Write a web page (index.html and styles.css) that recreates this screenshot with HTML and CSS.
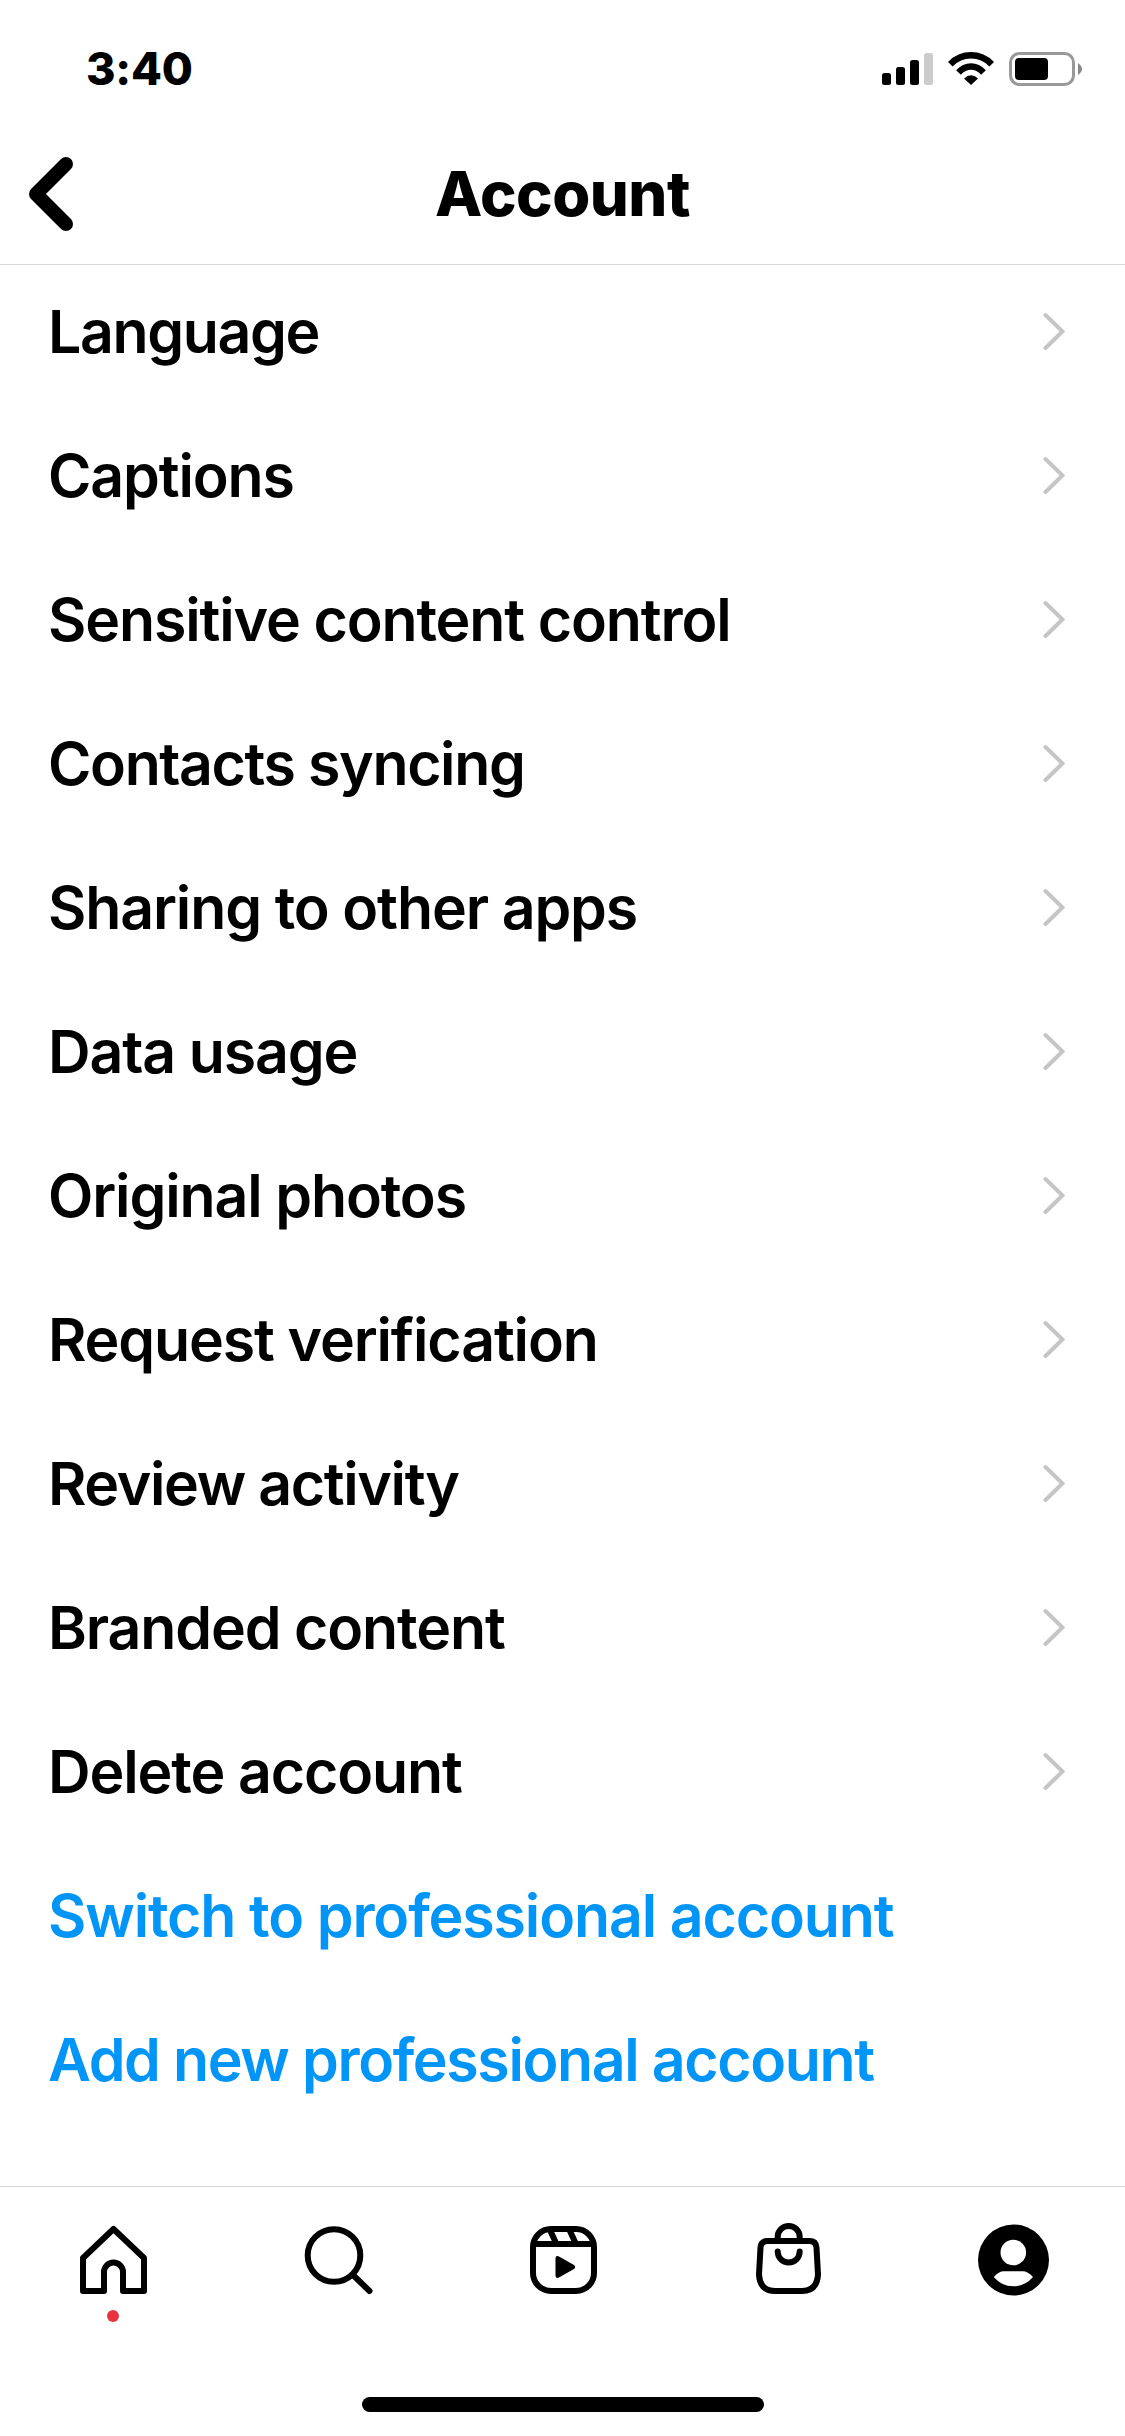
FILE: index.html
```
<!DOCTYPE html>
<html lang="en">
<head>
<meta charset="utf-8">
<title>Account</title>
<link rel="stylesheet" href="styles.css">
</head>
<body>
<svg class="defs" width="0" height="0"><symbol id="chev" viewBox="0 0 24 40"><path d="M4.500 4L21.500 20.500L4.500 37" fill="none" stroke="#c5c5c5" stroke-width="4" stroke-linecap="round"/></symbol></svg>
<header class="status">
  <span class="time">3:40</span>
  <span class="indicators">
    <svg width="51" height="34" viewBox="0 0 51 34"><rect y="21" width="9" height="12" rx="2.5"/><rect x="14" y="15" width="9" height="18" rx="2.5"/><rect x="28" y="8" width="9" height="25" rx="2.5"/><rect x="42" y="1" width="9" height="32" rx="2.5" fill="#ccc"/></svg>
    <svg width="46" height="34" viewBox="0 0 46 34"><g fill="none" stroke="#000" stroke-width="6.5"><path d="M2.300 12.200Q11 3.300 23 3.300T43.700 12.200"/><path d="M10.500 20.500Q16 14.500 23 14.500T35.500 20.500"/></g><path d="M16 26.500Q23 20 30 26.500L23 33z"/></svg>
    <svg width="74" height="34" viewBox="0 0 74 34"><rect x="1.500" y="1.500" width="63" height="31" rx="9" fill="none" stroke="#999" stroke-width="3"/><rect x="6" y="6" width="33" height="22" rx="4"/><path d="M69 11q8 6 0 12z" fill="#888"/></svg>
  </span>
</header>
<nav class="title-bar">
  <svg class="back" width="44" height="74" viewBox="0 0 44 74"><path d="M37 7L7 37l30 30" fill="none" stroke="#000" stroke-width="14" stroke-linecap="round" stroke-linejoin="round"/></svg>
  <h1>Account</h1>
</nav>
<main class="list">
  <div class="row tight"><span>Language</span><svg class="chev"><use href="#chev"/></svg></div>
  <div class="row"><span>Captions</span><svg class="chev"><use href="#chev"/></svg></div>
  <div class="row"><span>Sensitive content control</span><svg class="chev"><use href="#chev"/></svg></div>
  <div class="row tight"><span>Contacts syncing</span><svg class="chev"><use href="#chev"/></svg></div>
  <div class="row"><span>Sharing to other apps</span><svg class="chev"><use href="#chev"/></svg></div>
  <div class="row"><span>Data usage</span><svg class="chev"><use href="#chev"/></svg></div>
  <div class="row"><span>Original photos</span><svg class="chev"><use href="#chev"/></svg></div>
  <div class="row"><span>Request verification</span><svg class="chev"><use href="#chev"/></svg></div>
  <div class="row tight"><span>Review activity</span><svg class="chev"><use href="#chev"/></svg></div>
  <div class="row"><span>Branded content</span><svg class="chev"><use href="#chev"/></svg></div>
  <div class="row"><span>Delete account</span><svg class="chev"><use href="#chev"/></svg></div>
  <div class="row link"><span>Switch to professional account</span></div>
  <div class="row link tight"><span>Add new professional account</span></div>
</main>
<nav class="tabs">
  <a class="tab"><svg viewBox="0 0 72 72"><path d="M36.500 5L67 34v33H46V48a9.500 9.500 0 0 0-19 0v19H6V34z"/></svg><i class="dot"></i></a>
  <a class="tab"><svg viewBox="0 0 72 72"><circle cx="32" cy="31.500" r="26.300"/><path d="M51 51L67.500 67"/></svg></a>
  <a class="tab"><svg viewBox="0 0 72 72"><rect x="6" y="5" width="61" height="62" rx="18"/><path d="M6 20h61M22.500 5l7 15M42 5l7 15" stroke-linecap="butt"/><path class="solid" d="M28.500 34.500v17q0 3.500 3.500 2l15-8.500q2.500-2 0-4l-15-8.500q-3.500-1.500-3.500 2z"/></svg></a>
  <a class="tab"><svg viewBox="0 0 72 72"><path d="M15.500 17h42q6.500 0 7 6.500l1.500 27q-1 16.500-16 16.500H23Q8 67 7 50.500L8.500 23.500q.5-6.500 7-6.500z"/><path d="M25.700 17v-4a11 11 0 0 1 22 0v4M25.700 27.500a11 11 0 0 0 22 0"/></svg></a>
  <a class="tab"><svg viewBox="0 0 72 72"><circle class="solid" cx="36.500" cy="36" r="35.500"/><circle class="cut" cx="36.300" cy="28.500" r="12.800"/><path class="cut" d="M16.800 53q5-5.700 10-5.700h19q5 0 10.200 5.700-8 9.300-19.700 9.300T16.800 53z"/></svg></a>
</nav>
<div class="home-indicator"></div>
</body>
</html>
```
FILE: styles.css
```
* { box-sizing: border-box; }
body { margin: 0; height: 2436px; background: #fff; font-family: Inter, sans-serif; color: #000; }
.defs { position: absolute; }
.status { height: 132px; display: flex; justify-content: space-between; padding: 52px 42px 0 86px; }
.time { font-size: 45px; line-height: 34px; font-weight: 800; letter-spacing: -0.2px; }
.indicators { display: flex; gap: 15px; }
.title-bar { height: 133px; display: flex; align-items: center; padding: 0 29px 8px; border-bottom: 1px solid #d8d8d8; }
h1 { flex: 1; margin: 0 44px 0 0; text-align: center; font-size: 61.5px; line-height: 74px; font-weight: 800; letter-spacing: -0.5px; }
.list { height: 1927px; margin-top: -6px; }
.row { height: 144px; display: flex; justify-content: space-between; align-items: center; padding: 0 60px 0 48px; font-size: 59px; font-weight: 600; letter-spacing: -1.13px; }
.tight { letter-spacing: -1.38px; }
.chev { width: 24px; height: 40px; }
.link { color: #0095f6; }
.tabs { height: 211px; border-top: 1px solid #d8d8d8; display: grid; grid-template-columns: repeat(5, 1fr); justify-items: center; padding-top: 37px; }
.tab { display: flex; flex-direction: column; align-items: center; gap: 14px; }
.tab svg { width: 72px; height: 72px; display: block; overflow: visible; fill: none; stroke: #000; stroke-width: 6; stroke-linecap: round; stroke-linejoin: round; }
.tab .solid { fill: #000; stroke: none; }
.tab .cut { fill: #fff; stroke: none; }
.dot { width: 12px; height: 12px; border-radius: 50%; background: #e8323f; }
.home-indicator { width: 402px; height: 15px; margin: 0 auto; border-radius: 8px; background: #000; }
```
